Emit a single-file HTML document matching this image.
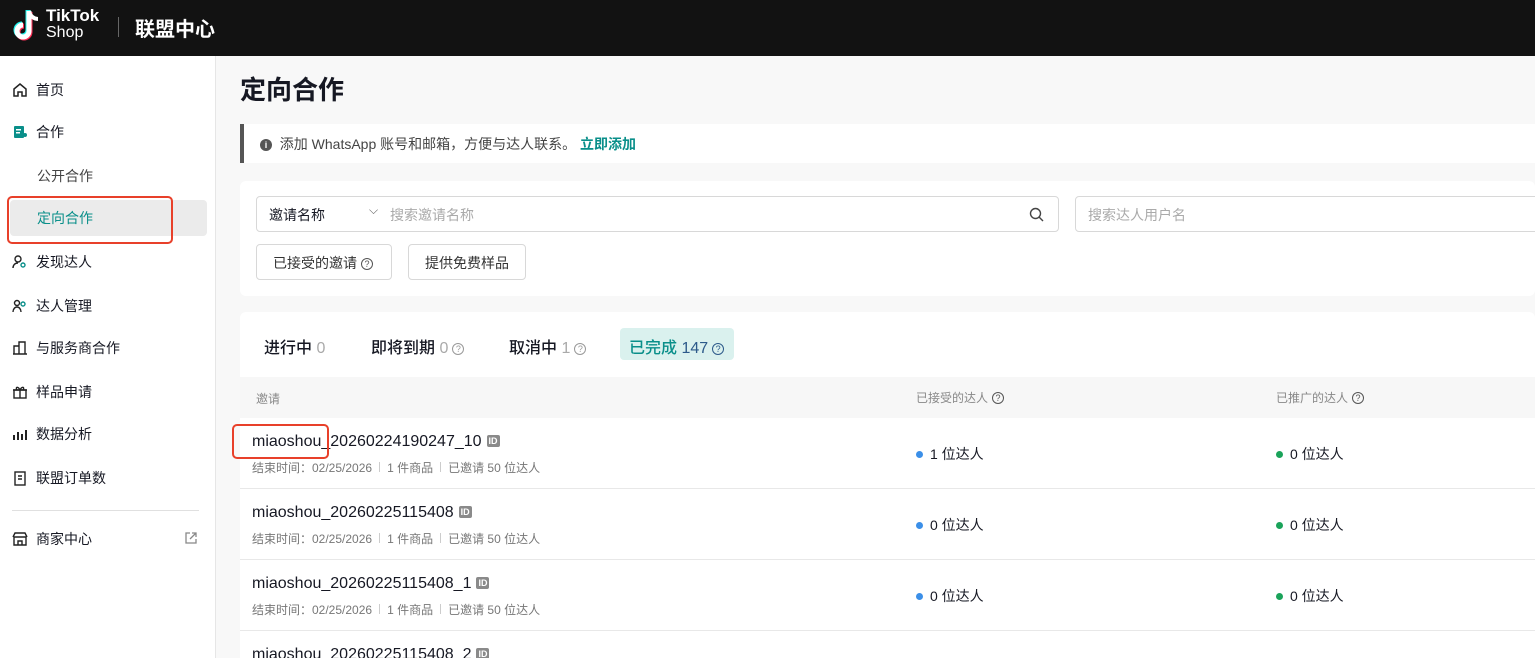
<!DOCTYPE html>
<html style="width:1535px;height:658px;overflow:hidden"><head><meta charset="utf-8"><style>
*{box-sizing:border-box;margin:0;padding:0}
body{width:1535px;height:658px;overflow:hidden;font-family:"Liberation Sans","Noto Sans CJK SC",sans-serif;background:#f8f8f8;color:#161823;position:relative}
.hdr{position:absolute;left:0;top:0;width:1535px;height:56px;background:#121212;color:#fff}
.side{position:absolute;left:0;top:56px;width:216px;height:602px;background:#fff;border-right:1px solid #e6e6e6}
.ni{position:absolute;left:12px;font-size:14px;display:flex;align-items:center;gap:8px}
.ni svg{width:16px;height:16px}
.sub{position:absolute;left:37px;font-size:14px;color:#444}
.card{position:absolute;background:#fff;left:240px;width:1295px}
.q{display:inline-block;width:12px;height:12px;border:1px solid #999;border-radius:50%;font-size:9px;line-height:10px;text-align:center;color:#999;vertical-align:1px;margin-left:4px}
.row{position:absolute;left:240px;width:1295px;height:71px;background:#fff;border-bottom:1px solid #e8e8e8}
.nm{position:absolute;left:12px;top:15px;font-size:16px;font-weight:500}
.id{display:inline-block;background:#8a8a8a;color:#fff;font-size:9px;font-weight:bold;padding:1px 2px;border-radius:2px;vertical-align:2px;margin-left:5px}
.meta{position:absolute;left:12px;top:41px;font-size:12px;color:#777}
.meta i{display:inline-block;width:1px;height:10px;background:#ccc;margin:0 7px}
.c1,.c2{position:absolute;top:26px;font-size:14px}
.c1{left:676px}.c2{left:1036px}
.dot{display:inline-block;width:7px;height:7px;border-radius:50%;margin-right:7px;vertical-align:1px}
</style></head><body>
<div class="hdr">
<svg style="position:absolute;left:12px;top:8px" width="30" height="36" viewBox="0 0 30 36"><path d="M17 3v20a6 6 0 1 1-6-6" fill="none" stroke="#25f4ee" stroke-width="5" transform="translate(-1,-1)"/><path d="M17 3v20a6 6 0 1 1-6-6" fill="none" stroke="#fe2c55" stroke-width="5" transform="translate(1,1)"/><path d="M17 3v20a6 6 0 1 1-6-6" fill="none" stroke="#fff" stroke-width="5"/><path d="M17 3c1 5 5 8 9 8" fill="none" stroke="#fff" stroke-width="4"/></svg>
<div style="position:absolute;left:46px;top:7px;font-size:17px;font-weight:bold;line-height:18px">TikTok</div>
<div style="position:absolute;left:46px;top:24px;font-size:16px;line-height:18px">Shop</div>
<div style="position:absolute;left:118px;top:17px;width:1px;height:20px;background:#666"></div>
<div style="position:absolute;left:135px;top:13px;font-size:20px;font-weight:bold">联盟中心</div>
</div>
<div class="side">
<div class="ni" style="top:24px"><svg viewBox="0 0 16 16"><path d="M2 7l6-5 6 5v7H10v-4H6v4H2z" fill="none" stroke="#222" stroke-width="1.5"/></svg>首页</div>
<div class="ni" style="top:66px"><svg viewBox="0 0 16 16"><rect x="2" y="2" width="10" height="12" rx="1" fill="#0a8f8a"/><rect x="4" y="5" width="5" height="1.5" fill="#fff"/><rect x="4" y="8" width="4" height="1.5" fill="#fff"/><circle cx="13" cy="11" r="2" fill="#0a8f8a"/></svg>合作</div>
<div class="sub" style="top:110px">公开合作</div>
<div style="position:absolute;left:10px;top:144px;width:197px;height:36px;background:#ebebeb;border-radius:4px"></div>
<div class="sub" style="top:152px;color:#0a8f8a">定向合作</div>
<div style="position:absolute;left:7px;top:140px;width:166px;height:48px;border:2px solid #e8402a;border-radius:5px"></div>
<div class="ni" style="top:196px"><svg viewBox="0 0 16 16"><circle cx="6" cy="5" r="3" fill="none" stroke="#222" stroke-width="1.4"/><path d="M1 14c0-3 2-5 5-5" fill="none" stroke="#222" stroke-width="1.4"/><circle cx="11" cy="11" r="2" fill="none" stroke="#0a8f8a" stroke-width="1.4"/></svg>发现达人</div>
<div class="ni" style="top:240px"><svg viewBox="0 0 16 16"><circle cx="5" cy="5" r="2.5" fill="none" stroke="#222" stroke-width="1.4"/><path d="M1 14c0-3 2-5 4-5s4 2 4 5" fill="none" stroke="#222" stroke-width="1.4"/><circle cx="11" cy="6" r="2" fill="none" stroke="#0a8f8a" stroke-width="1.4"/></svg>达人管理</div>
<div class="ni" style="top:282px"><svg viewBox="0 0 16 16"><path d="M2 14V6h5v8M7 14V2h6v12M1 14h14" fill="none" stroke="#222" stroke-width="1.4"/></svg>与服务商合作</div>
<div class="ni" style="top:326px"><svg viewBox="0 0 16 16"><rect x="2" y="6" width="12" height="8" fill="none" stroke="#222" stroke-width="1.4"/><path d="M1 6h14M8 6v8M8 6C6 2 3 3 5 6M8 6c2-4 5-3 3 0" fill="none" stroke="#222" stroke-width="1.4"/></svg>样品申请</div>
<div class="ni" style="top:368px"><svg viewBox="0 0 16 16"><path d="M2 14V9M6 14V6M10 14V8M14 14V4" stroke="#222" stroke-width="2"/></svg>数据分析</div>
<div class="ni" style="top:412px"><svg viewBox="0 0 16 16"><rect x="3" y="2" width="10" height="13" fill="none" stroke="#222" stroke-width="1.4"/><path d="M6 6h4M6 9h4" stroke="#222" stroke-width="1.4"/></svg>联盟订单数</div>
<div style="position:absolute;left:12px;top:454px;width:187px;height:1px;background:#e0e0e0"></div>
<div class="ni" style="top:473px"><svg viewBox="0 0 16 16"><path d="M2 6h12v8H2zM1 6l2-4h10l2 4M6 14v-4h4v4" fill="none" stroke="#222" stroke-width="1.4"/></svg>商家中心</div>
<svg style="position:absolute;left:185px;top:476px" width="12" height="12" viewBox="0 0 12 12"><path d="M5 1H1v10h10V7M7 1h4v4M11 1L5 7" fill="none" stroke="#888" stroke-width="1.3"/></svg>
</div>
<div style="position:absolute;left:240px;top:70px;font-size:26px;font-weight:bold">定向合作</div>
<div class="card" style="top:124px;height:39px;border-left:4px solid #555;font-size:14px;color:#444;padding:10px 0 0 16px"><span style="display:inline-block;width:12px;height:12px;border-radius:50%;background:#555;color:#fff;font-size:9px;text-align:center;line-height:12px;font-weight:bold;vertical-align:1px">i</span>&nbsp; 添加 WhatsApp 账号和邮箱，方便与达人联系。 <b style="color:#0a8f8a;font-weight:600">立即添加</b></div>
<div class="card" style="top:181px;height:115px;border-radius:6px">
<div style="position:absolute;left:16px;top:15px;width:803px;height:36px;border:1px solid #d8d8d8;border-radius:4px;font-size:14px">
<span style="position:absolute;left:12px;top:8px">邀请名称</span><span style="position:absolute;left:112px;top:6px;color:#666;font-size:12px">⌵</span>
<span style="position:absolute;left:133px;top:8px;color:#aaa">搜索邀请名称</span>
<svg style="position:absolute;right:14px;top:10px" width="15" height="15" viewBox="0 0 15 15"><circle cx="6.5" cy="6.5" r="5" fill="none" stroke="#444" stroke-width="1.4"/><path d="M10 10l4 4" stroke="#444" stroke-width="1.4"/></svg></div>
<div style="position:absolute;left:835px;top:15px;width:470px;height:36px;border:1px solid #d8d8d8;border-radius:4px;font-size:14px;color:#aaa;padding:8px 12px">搜索达人用户名</div>
<div style="position:absolute;left:16px;top:63px;width:136px;height:36px;border:1px solid #d8d8d8;border-radius:4px;font-size:14px;color:#333;padding:8px 16px">已接受的邀请<span class="q" style="border-color:#555;color:#555">?</span></div>
<div style="position:absolute;left:168px;top:63px;width:118px;height:36px;border:1px solid #d8d8d8;border-radius:4px;font-size:14px;color:#333;padding:8px 16px">提供免费样品</div>
</div>
<div class="card" style="top:312px;height:65px;border-radius:6px 6px 0 0;font-size:16px;font-weight:500">
<span style="position:absolute;left:24px;top:22px">进行中 <span style="color:#aaa">0</span></span>
<span style="position:absolute;left:131px;top:22px">即将到期 <span style="color:#aaa">0</span><span class="q">?</span></span>
<span style="position:absolute;left:269px;top:22px">取消中 <span style="color:#aaa">1</span><span class="q">?</span></span>
<span style="position:absolute;left:380px;top:16px;width:114px;height:32px;background:#daf1ee;border-radius:4px;color:#0a8f8a;padding:6px 9px">已完成 <span style="color:#2d5a8a">147</span><span class="q" style="border-color:#2d5a8a;color:#2d5a8a">?</span></span>
</div>
<div style="position:absolute;left:240px;top:377px;width:1295px;height:41px;background:#f7f7f7;font-size:12px;color:#888">
<span style="position:absolute;left:16px;top:13px">邀请</span>
<span style="position:absolute;left:676px;top:12px">已接受的达人<span class="q" style="border-color:#555;color:#555">?</span></span>
<span style="position:absolute;left:1036px;top:12px">已推广的达人<span class="q" style="border-color:#555;color:#555">?</span></span>
</div>
<div class="row" style="top:418px"><div class="nm">miaoshou_20260224190247_10<span class="id">ID</span></div><div class="meta">结束时间：02/25/2026<i></i>1 件商品<i></i>已邀请 50 位达人</div><div class="c1"><span class="dot" style="background:#3b8fe8"></span>1 位达人</div><div class="c2"><span class="dot" style="background:#1aa35a"></span>0 位达人</div></div>
<div class="row" style="top:489px"><div class="nm">miaoshou_20260225115408<span class="id">ID</span></div><div class="meta">结束时间：02/25/2026<i></i>1 件商品<i></i>已邀请 50 位达人</div><div class="c1"><span class="dot" style="background:#3b8fe8"></span>0 位达人</div><div class="c2"><span class="dot" style="background:#1aa35a"></span>0 位达人</div></div>
<div class="row" style="top:560px"><div class="nm">miaoshou_20260225115408_1<span class="id">ID</span></div><div class="meta">结束时间：02/25/2026<i></i>1 件商品<i></i>已邀请 50 位达人</div><div class="c1"><span class="dot" style="background:#3b8fe8"></span>0 位达人</div><div class="c2"><span class="dot" style="background:#1aa35a"></span>0 位达人</div></div>
<div class="row" style="top:631px;height:27px;border-bottom:none;overflow:hidden"><div class="nm">miaoshou_20260225115408_2<span class="id">ID</span></div></div>
<div style="position:absolute;left:232px;top:424px;width:97px;height:35px;border:2px solid #e8402a;border-radius:5px"></div>
</body></html>
